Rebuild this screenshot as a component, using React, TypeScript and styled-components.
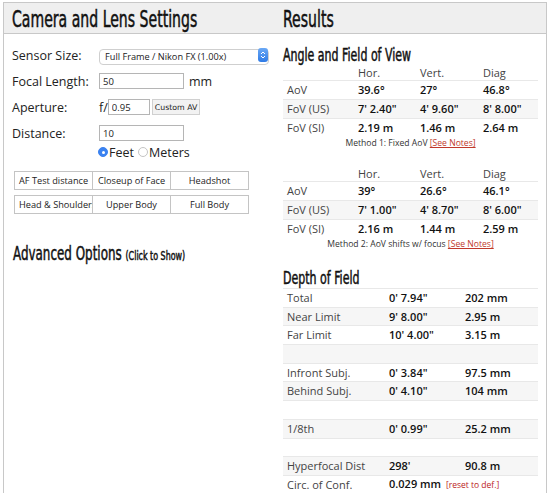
import React from "react";
import styled, { createGlobalStyle } from "styled-components";

const GlobalStyle = createGlobalStyle`
  html, body {
    margin: 0;
    padding: 0;
    background: #fff;
  }
  body {
    font-family: "Open Sans", "Liberation Sans", sans-serif;
    color: #222;
  }
`;

// no narrow display face installed, so the condensed face gets squeezed a bit more
const Narrow = styled.span`
  display: inline-block;
  white-space: nowrap;
  font-family: "DejaVu Sans Condensed", "DejaVu Sans", sans-serif;
  font-stretch: condensed;
  font-weight: 400;
  -webkit-text-stroke: 0.5px currentColor;
  transform: scaleX(0.68);
  transform-origin: left center;
`;

const Page = styled.div`
  margin: 2px 3px 0 3px;
  border: 1px solid #c8c8c8;
  border-bottom: none;
  display: grid;
  grid-template-columns: 275px 1fr;
  height: 491px;
  overflow: hidden;
`;

const Column = styled.div`
  display: flex;
  flex-direction: column;
  min-width: 0;
`;

const Header = styled.h2<{ $pad: number }>`
  margin: 0;
  height: 30px;
  background: #efefef;
  border-bottom: 1px solid #c8c8c8;
  font-weight: 400;
  font-size: 23px;
  line-height: 31px;
  padding-left: ${(p) => p.$pad}px;
  color: #111;
  white-space: nowrap;
  overflow: hidden;
`;

const Body = styled.div`
  padding: 8px 0 0 8px;
  display: flex;
  flex-direction: column;
`;

const FormRow = styled.div`
  display: flex;
  align-items: center;
  height: 26px;
  font-size: 12.5px;
`;

const Label = styled.span`
  width: 87px;
  flex-shrink: 0;
  color: #222;
`;

const SelectWrap = styled.div`
  position: relative;
  width: 170px;
  height: 16px;
`;

const Select = styled.select`
  appearance: none;
  width: 100%;
  height: 16px;
  border: 1px solid #cfcfcf;
  border-radius: 4px;
  background: #fff;
  font-family: "Open Sans", sans-serif;
  font-size: 9.2px;
  padding: 0 0 0 5px;
  color: #222;
`;

const SelectArrows = styled.span`
  position: absolute;
  right: 1px;
  top: 1px;
  width: 10px;
  height: 14px;
  border-radius: 3px;
  background: linear-gradient(#6aa8f5, #2f7be6);
  display: flex;
  align-items: center;
  justify-content: center;
`;

const TextInput = styled.input<{ $w: number }>`
  width: ${(p) => p.$w}px;
  height: 16px;
  box-sizing: border-box;
  border: 1px solid #b5b5b5;
  font-family: "Open Sans", sans-serif;
  font-size: 9.5px;
  padding: 0 3px;
  color: #222;
  margin: 0;
`;

const Unit = styled.span`
  margin-left: 5px;
`;

const FPrefix = styled.span`
  margin-right: 0;
`;

const SmallButton = styled.button`
  margin-left: 2px;
  height: 16px;
  padding: 0 2px;
  border: 1px solid #d0d0d0;
  background: #f2f2f2;
  font-family: "DejaVu Sans", sans-serif;
  font-size: 7.8px;
  color: #222;
`;

const RadioRow = styled.div`
  display: flex;
  align-items: center;
  height: 14px;
  margin: -1px 0 0 86px;
  font-size: 12.5px;
  gap: 1px;
`;

const Radio = styled.span<{ $on?: boolean }>`
  width: 10px;
  height: 10px;
  border-radius: 50%;
  box-sizing: border-box;
  background: ${(p) => (p.$on ? "#3b82f0" : "#fff")};
  border: 1px solid ${(p) => (p.$on ? "#3b82f0" : "#c4c4c4")};
  display: inline-flex;
  align-items: center;
  justify-content: center;
  &::after {
    content: "";
    width: 3px;
    height: 3px;
    border-radius: 50%;
    background: ${(p) => (p.$on ? "#fff" : "transparent")};
  }
`;

const RadioText = styled.span`
  margin-right: 3px;
`;

const PresetGrid = styled.div`
  margin: 12px 0 0 2px;
  width: 234px;
  display: grid;
  grid-template-columns: repeat(3, 78px);
  row-gap: 5px;
`;

const Preset = styled.button`
  height: 19px;
  border: 1px solid #c4c4c4;
  background: #fff;
  font-family: "Open Sans", sans-serif;
  font-size: 9.2px;
  color: #222;
  padding: 0 2px;
  white-space: nowrap;
  overflow: hidden;
  text-align: center;
  margin-right: -1px;
  &:nth-child(3n + 1) {
    text-align: left;
    padding-left: 4px;
  }
`;

const Advanced = styled.h3`
  margin: 27px 0 0 1px;
  font-weight: 400;
  font-size: 19.5px;
  line-height: 24px;
  color: #111;
  small {
    font-size: 13px;
  }
`;

const RightBody = styled.div`
  padding: 10px 8px 0 4px;
  display: flex;
  flex-direction: column;
`;

const SubHead = styled.h3`
  margin: 0;
  font-weight: 400;
  font-size: 18px;
  line-height: 20px;
  color: #111;
`;

const Table = styled.table<{ $cols: string; $row: number }>`
  border-collapse: collapse;
  width: 255px;
  table-layout: fixed;
  font-size: 11px;
  col:nth-child(1) { width: ${(p) => p.$cols.split(" ")[0]}; }
  col:nth-child(2) { width: ${(p) => p.$cols.split(" ")[1]}; }
  col:nth-child(3) { width: ${(p) => p.$cols.split(" ")[2]}; }
  th {
    font-weight: 400;
    text-align: left;
    color: #444;
    height: 15px;
    line-height: 14px;
    padding: 0 4px;
  }
  td {
    height: ${(p) => p.$row}px;
    padding: 0 4px;
    line-height: 14px;
    border-top: 1px solid #e8e8e8;
    white-space: nowrap;
  }
  tbody tr:nth-child(even) td {
    background: #f6f6f6;
  }
  td:first-child {
    color: #444;
  }
  td + td {
    font-weight: 600;
    color: #111;
  }
`;

const Caption = styled.div`
  text-align: center;
  font-size: 8.6px;
  line-height: 13px;
  color: #333;
  height: 13px;
`;

const NoteLink = styled.a`
  color: #c0392b;
  text-decoration: underline;
`;

const Reset = styled.span`
  color: #b22;
  font-weight: 400;
  font-size: 8.5px;
  margin-left: 2px;
`;

const Gap = styled.div<{ $h: number }>`
  height: ${(p) => p.$h}px;
`;

const presets = [
  "AF Test distance",
  "Closeup of Face",
  "Headshot",
  "Head & Shoulders",
  "Upper Body",
  "Full Body",
];

type FovRow = [string, string, string, string];

const FovTable: React.FC<{ rows: FovRow[]; note: string }> = ({ rows, note }) => (
  <>
    <Table $cols="71px 62px 63px" $row={18}>
      <colgroup>
        <col />
        <col />
        <col />
        <col />
      </colgroup>
      <thead>
        <tr>
          <th />
          <th>Hor.</th>
          <th>Vert.</th>
          <th>Diag</th>
        </tr>
      </thead>
      <tbody>
        {rows.map((r) => (
          <tr key={r[0]}>
            {r.map((c, i) => (
              <td key={i}>{c}</td>
            ))}
          </tr>
        ))}
      </tbody>
    </Table>
    <Caption>
      {note} <NoteLink href="#notes">[See Notes]</NoteLink>
    </Caption>
  </>
);

const dof: [string, string, string][] = [
  ["Total", "0' 7.94\"", "202 mm"],
  ["Near Limit", "9' 8.00\"", "2.95 m"],
  ["Far Limit", "10' 4.00\"", "3.15 m"],
  ["", "", ""],
  ["Infront Subj.", "0' 3.84\"", "97.5 mm"],
  ["Behind Subj.", "0' 4.10\"", "104 mm"],
  ["", "", ""],
  ["1/8th", "0' 0.99\"", "25.2 mm"],
  ["", "", ""],
  ["Hyperfocal Dist", "298'", "90.8 m"],
];

const App: React.FC = () => (
  <>
    <GlobalStyle />
    <Page>
      <Column>
        <Header $pad={8}>
          <Narrow>Camera and Lens Settings</Narrow>
        </Header>
        <Body>
          <FormRow>
            <Label>Sensor Size:</Label>
            <SelectWrap>
              <Select defaultValue="ff">
                <option value="ff">Full Frame / Nikon FX (1.00x)</option>
              </Select>
              <SelectArrows>
                <svg width="6" height="10" viewBox="0 0 6 10">
                  <path d="M1 4 L3 2 L5 4 M1 6 L3 8 L5 6" stroke="#fff" strokeWidth="1" fill="none" />
                </svg>
              </SelectArrows>
            </SelectWrap>
          </FormRow>
          <FormRow>
            <Label>Focal Length:</Label>
            <TextInput $w={85} defaultValue="50" />
            <Unit>mm</Unit>
          </FormRow>
          <FormRow>
            <Label>Aperture:</Label>
            <FPrefix>f/</FPrefix>
            <TextInput $w={42} defaultValue="0.95" />
            <SmallButton>Custom AV</SmallButton>
          </FormRow>
          <FormRow>
            <Label>Distance:</Label>
            <TextInput $w={85} defaultValue="10" />
          </FormRow>
          <RadioRow>
            <Radio $on />
            <RadioText>Feet</RadioText>
            <Radio />
            <RadioText>Meters</RadioText>
          </RadioRow>
          <PresetGrid>
            {presets.map((p) => (
              <Preset key={p}>{p}</Preset>
            ))}
          </PresetGrid>
          <Advanced>
            <Narrow>
              Advanced Options <small>(Click to Show)</small>
            </Narrow>
          </Advanced>
        </Body>
      </Column>
      <Column>
        <Header $pad={4}>
          <Narrow>Results</Narrow>
        </Header>
        <RightBody>
          <SubHead>
            <Narrow>Angle and Field of View</Narrow>
          </SubHead>
          <FovTable
            rows={[
              ["AoV", "39.6°", "27°", "46.8°"],
              ["FoV (US)", "7' 2.40\"", "4' 9.60\"", "8' 8.00\""],
              ["FoV (SI)", "2.19 m", "1.46 m", "2.64 m"],
            ]}
            note="Method 1: Fixed AoV"
          />
          <Gap $h={16} />
          <FovTable
            rows={[
              ["AoV", "39°", "26.6°", "46.1°"],
              ["FoV (US)", "7' 1.00\"", "4' 8.70\"", "8' 6.00\""],
              ["FoV (SI)", "2.16 m", "1.44 m", "2.59 m"],
            ]}
            note="Method 2: AoV shifts w/ focus"
          />
          <Gap $h={16} />
          <SubHead>
            <Narrow>Depth of Field</Narrow>
          </SubHead>
          <Table $cols="102px 76px 77px" $row={17.7}>
            <colgroup>
              <col />
              <col />
              <col />
            </colgroup>
            <tbody>
              {dof.map((r, i) => (
                <tr key={i}>
                  <td>{r[0]}</td>
                  <td>{r[1]}</td>
                  <td>{r[2]}</td>
                </tr>
              ))}
              <tr>
                <td>Circ. of Conf.</td>
                <td colSpan={2}>
                  0.029 mm <Reset>[reset to def.]</Reset>
                </td>
              </tr>
            </tbody>
          </Table>
        </RightBody>
      </Column>
    </Page>
  </>
);

export default App;
